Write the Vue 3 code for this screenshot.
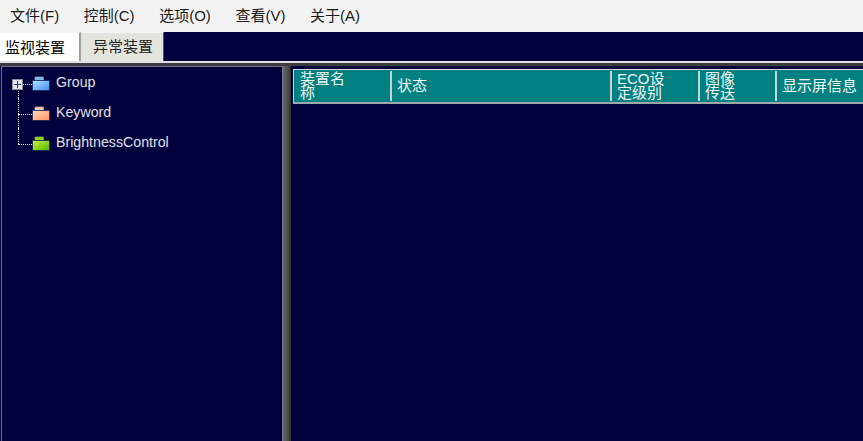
<script setup>
const menus = ["文件(F)", "控制(C)", "选项(O)", "查看(V)", "关于(A)"];

const nodes = [
  { label: "Group", color: "#3f8ff2", light: "#b4e0ff", tab: "#7fb8ea" },
  { label: "Keyword", color: "#ff8f60", light: "#ffdcb8", tab: "#e8c8a8" },
  { label: "BrightnessControl", color: "#4fb800", light: "#d0f040", tab: "#90d020" },
];

const columns = [
  { label: "装置名称", width: 96, textWidth: 48 },
  { label: "状态", width: 220 },
  { label: "ECO设定级别", width: 88, textWidth: 48 },
  { label: "图像传送", width: 77, textWidth: 32 },
  { label: "显示屏信息", width: 88 },
];
</script>

<template>
  <div class="window">
    <div class="menubar">
      <span v-for="m in menus" :key="m" class="menu-item">{{ m }}</span>
    </div>

    <div class="tabbar">
      <div class="tab active">监视装置</div>
      <div class="tab">异常装置</div>
    </div>

    <div class="split">
      <div class="tree">
        <div v-for="(n, i) in nodes" :key="n.label" class="node">
          <div class="guide">
            <span class="guide-v" :class="{ first: i === 0, last: i === nodes.length - 1 }"></span>
            <span class="guide-h"></span>
            <span v-if="i === 0" class="expander">
              <svg width="9" height="9" viewBox="0 0 9 9">
                <path d="M1 4.5h7M4.5 1v7" stroke="#1c3f94" stroke-width="1" fill="none" />
              </svg>
            </span>
          </div>
          <svg class="folder" width="18" height="15" viewBox="0 0 18 15">
            <defs>
              <linearGradient :id="'fold' + i" x1="0" y1="0" x2="1" y2="1">
                <stop offset="0" :stop-color="n.light" />
                <stop offset="1" :stop-color="n.color" />
              </linearGradient>
            </defs>
            <path d="M2.5 4.5V2C2.5 1 3.2.5 4 .5h6.5c.8 0 1.5.5 1.5 1.5v2.5z" :fill="n.tab" stroke="#10205a" stroke-width=".5" />
            <path d="M.5 4.5h17v10H.5z" :fill="'url(#fold' + i + ')'" stroke="#10205a" stroke-width=".7" />
          </svg>
          <span class="node-label">{{ n.label }}</span>
        </div>
      </div>

      <div class="divider"></div>

      <div class="list">
        <div class="list-head">
          <div
            v-for="c in columns"
            :key="c.label"
            class="col"
            :style="{ width: c.width + 'px' }"
          >
            <span
              class="col-text"
              :class="{ wrap: c.textWidth }"
              :style="c.textWidth ? { maxWidth: c.textWidth + 'px' } : null"
            >{{ c.label }}</span>
          </div>
        </div>
      </div>
    </div>
  </div>
</template>

<style>
html,
body {
  margin: 0;
  background: #00003c;
  overflow: hidden;
}
</style>

<style scoped>
.window {
  width: 863px;
  height: 441px;
  display: flex;
  flex-direction: column;
  overflow: hidden;
  background: #00003c;
  font-family: "Liberation Sans", "Noto Sans CJK SC", sans-serif;
}

.menubar {
  height: 32px;
  flex: none;
  box-sizing: border-box;
  display: flex;
  align-items: center;
  gap: 24.6px;
  padding: 0 0 3px 10px;
  background: #f2f2f2;
  color: #1a1a1a;
  font-size: 15px;
}

.menu-item {
  white-space: nowrap;
}

.tabbar {
  height: 29px;
  flex: none;
  display: flex;
  background: #00003c;
  border-bottom: 2px solid #e0e0e8;
}

.tab {
  width: 83px;
  box-sizing: border-box;
  display: flex;
  align-items: center;
  padding: 0 0 3px 12px;
  font-size: 15px;
  color: #222;
  background: #e4e4de;
  border-right: 1px solid #555;
  border-top: 1px solid #f4f4f4;
}

.tab.active {
  width: 81px;
  padding: 0 0 1px 5px;
  background: #fff;
  color: #000;
  border-right: 2px solid #a0a0a0;
}

.split {
  flex: 1;
  display: flex;
  min-height: 0;
  border-top: 3px solid #3c3c3c;
}

.tree {
  width: 282px;
  flex: none;
  box-sizing: border-box;
  margin-left: 1px;
  padding-top: 1px;
  background: #00003c;
  border: 1px solid #6e7188;
  border-bottom: none;
}

.node {
  height: 30px;
  display: flex;
  align-items: center;
  padding-left: 10px;
}

.guide {
  position: relative;
  width: 20px;
  height: 30px;
  flex: none;
}

.guide-v {
  position: absolute;
  left: 6px;
  top: 0;
  bottom: 0;
  border-left: 1px dotted #e8e8e8;
}

.guide-v.first {
  top: 16px;
}

.guide-v.last {
  bottom: 14px;
}

.guide-h {
  position: absolute;
  left: 6px;
  right: 0;
  top: 16px;
  border-top: 1px dotted #e8e8e8;
}

.expander {
  position: absolute;
  left: 0;
  top: 11px;
  width: 11px;
  height: 11px;
  display: flex;
  align-items: center;
  justify-content: center;
  background: #e6e6ea;
  border: 1px solid #8a8a9c;
  box-sizing: border-box;
}

.folder {
  flex: none;
}

.node-label {
  margin: 0 0 2px 6px;
  color: #e0e0ea;
  font-size: 14.2px;
  white-space: nowrap;
}

.divider {
  width: 8px;
  flex: none;
  background: linear-gradient(90deg, #6a6a72, #484848 70%, #2c2c2c);
}

.list {
  flex: 1;
  min-width: 0;
  padding: 3px 0 0 2px;
  background: #00003c;
}

.list-head {
  height: 35px;
  box-sizing: border-box;
  display: flex;
  background: #008080;
  border-top: 1px solid #d0d8d8;
  border-bottom: 2px solid #9aa8a8;
  border-left: 1px solid #c8d4d4;
  overflow: hidden;
}

.col {
  flex: none;
  box-sizing: border-box;
  display: flex;
  align-items: center;
  margin: 1px 0;
  padding-left: 5px;
  color: #f4f4f4;
  font-size: 15px;
  line-height: 14px;
  border-left: 2px solid #c8d4d4;
}

.col:first-child {
  border-left-color: transparent;
  padding-left: 4px;
}

.col-text {
  white-space: nowrap;
}

.col-text.wrap {
  white-space: normal;
}
</style>
